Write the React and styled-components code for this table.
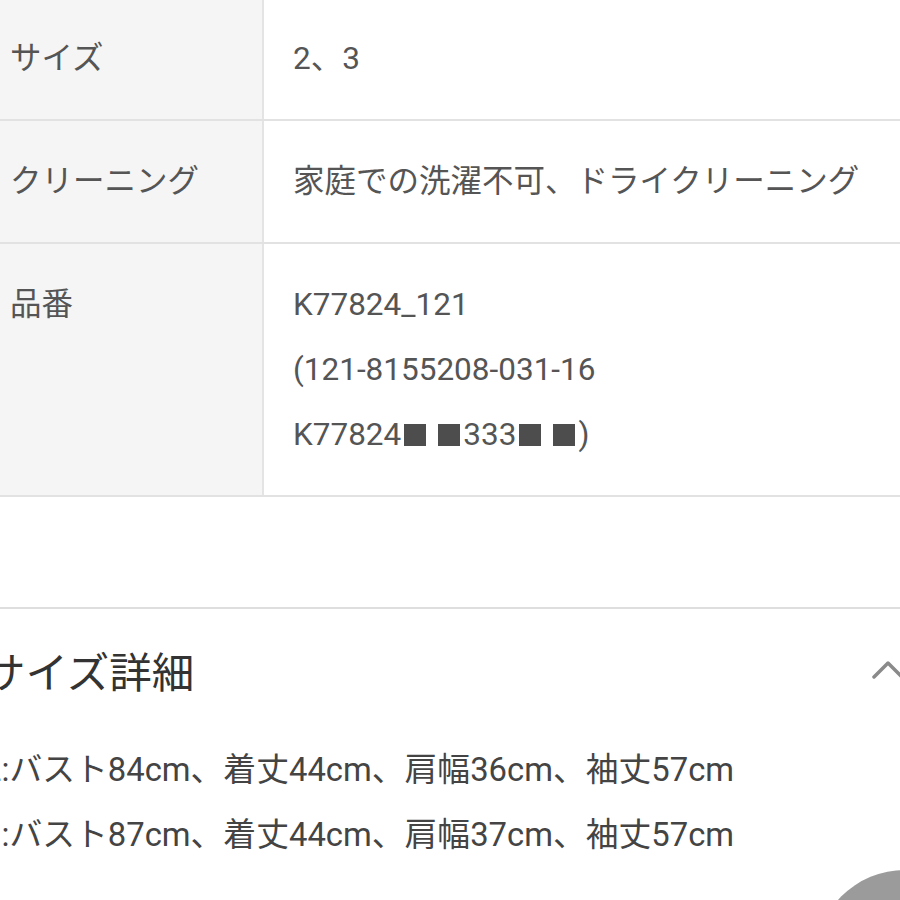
import React from "react";
import styled, { createGlobalStyle } from "styled-components";

const GlobalStyle = createGlobalStyle`
  html, body {
    margin: 0;
    padding: 0;
    background: #ffffff;
    overflow: hidden;
  }
  body {
    width: 900px;
    height: 900px;
    font-family: Roboto, "Noto Sans CJK JP", sans-serif;
  }
`;

const Page = styled.div`
  width: 900px;
  height: 900px;
  overflow: hidden;
  position: relative;
`;

// スペック表
const SpecTable = styled.div`
  margin-top: -2px;
`;

const SpecRow = styled.div`
  display: grid;
  grid-template-columns: 264px 1fr;
  border-bottom: 2px solid #e2e2e2;
`;

const SpecLabel = styled.div`
  background: #f5f5f5;
  border-right: 2px solid #e4e4e4;
  padding: 28px 10px;
  font-size: 31.5px;
  line-height: 65px;
  color: #555;
  white-space: nowrap;
`;

const SpecValue = styled.div`
  padding: 28px 29px;
  font-size: 31.5px;
  line-height: 65px;
  color: #555;
  white-space: nowrap;
`;

const ValueLine = styled.div`
  white-space: nowrap;
`;

const Masked = styled.span`
  display: inline-block;
  width: 22px;
  height: 22px;
  background: #4d4d4d;
  margin: 0 ${(p) => (p.$pair ? "9px" : "3px")} 0 3px;
  vertical-align: -1px;
`;

// サイズ詳細
const Section = styled.section`
  margin: 110px -4px 0 -17px;
  border-top: 2px solid #dedede;
`;

const SectionHeader = styled.div`
  display: flex;
  align-items: center;
  justify-content: space-between;
  height: 120px;
`;

const SectionTitle = styled.h2`
  margin: 0;
  font-size: 42.5px;
  font-weight: 400;
  color: #333;
  white-space: nowrap;
`;

const SectionBody = styled.div`
  padding-top: 9px;
  font-size: 32.8px;
  line-height: 65px;
  color: #444;
`;

const ScrollTop = styled.div`
  position: fixed;
  left: 815px;
  top: 870px;
  width: 180px;
  height: 180px;
  border-radius: 50%;
  background: #9b9b9b;
`;

const Chevron = () => (
  <svg width="32" height="22" viewBox="0 0 32 22">
    <polyline
      points="2,19 16,5 30,19"
      fill="none"
      stroke="#8a8a8a"
      strokeWidth="3.5"
      strokeLinecap="round"
      strokeLinejoin="round"
    />
  </svg>
);

const sizeDetails = [
  "2:バスト84cm、着丈44cm、肩幅36cm、袖丈57cm",
  "3:バスト87cm、着丈44cm、肩幅37cm、袖丈57cm",
];

export default function App() {
  return (
    <Page>
      <GlobalStyle />
      <SpecTable>
        <SpecRow>
          <SpecLabel>サイズ</SpecLabel>
          <SpecValue>2、3</SpecValue>
        </SpecRow>
        <SpecRow>
          <SpecLabel>クリーニング</SpecLabel>
          <SpecValue>家庭での洗濯不可、ドライクリーニング</SpecValue>
        </SpecRow>
        <SpecRow>
          <SpecLabel>品番</SpecLabel>
          <SpecValue>
            <ValueLine>K77824_121</ValueLine>
            <ValueLine>(121-8155208-031-16</ValueLine>
            <ValueLine>
              K77824<Masked $pair /><Masked />333<Masked $pair /><Masked />)
            </ValueLine>
          </SpecValue>
        </SpecRow>
      </SpecTable>

      <Section>
        <SectionHeader>
          <SectionTitle>サイズ詳細</SectionTitle>
          <Chevron />
        </SectionHeader>
        <SectionBody>
          {sizeDetails.map((line) => (
            <ValueLine key={line}>{line}</ValueLine>
          ))}
        </SectionBody>
      </Section>

      <ScrollTop />
    </Page>
  );
}
